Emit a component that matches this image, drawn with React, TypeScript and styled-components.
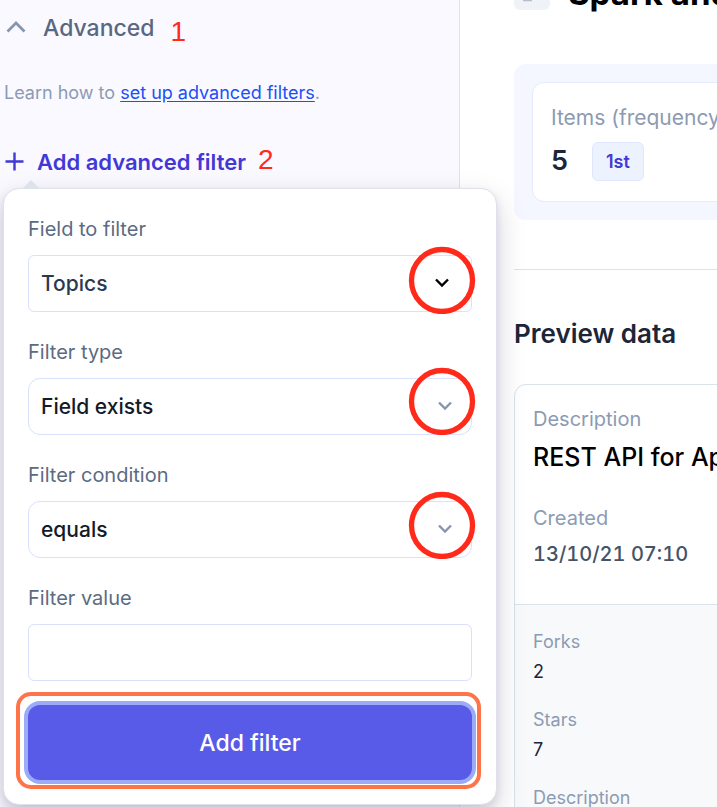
import React from "react";
import styled, { createGlobalStyle, css } from "styled-components";

const GlobalStyle = createGlobalStyle`
  *, *::before, *::after { box-sizing: border-box; }
  body {
    margin: 0;
    background: #ffffff;
    font-family: Inter, "Liberation Sans", sans-serif;
    color: #1c2638;
  }
  button, input, select { font: inherit; }
`;

const Page = styled.div`
  display: grid;
  grid-template-columns: 460px minmax(0, 1fr);
  height: 100vh;
  overflow: hidden;
`;

const Sidebar = styled.aside`
  display: flex;
  flex-direction: column;
  align-items: flex-start;
  padding: 12px 4px;
  background: #faf9ff;
  border-right: 1px solid #dde2f8;
`;

const StepRow = styled.div`
  display: flex;
  align-items: flex-start;
  gap: 12px;
`;

const SectionToggle = styled.button`
  display: flex;
  align-items: center;
  gap: 15px;
  padding: 0;
  border: 0;
  background: none;
  color: #586880;
  font-size: 23px;
  font-weight: 500;
  line-height: 32px;
`;

const StepNumber = styled.span`
  color: #ff2a1a;
  font-family: "Liberation Sans", Arial, sans-serif;
  font-size: 28px;
  line-height: 28px;
`;

const LowStepNumber = styled(StepNumber)`
  padding: 6px 0 0 4px;
`;

const Hint = styled.p`
  margin: 35px 0 41px;
  color: #8c9bb3;
  font-size: 18px;
  line-height: 24px;

  a {
    color: #1b50f5;
    text-underline-offset: 2px;
  }
`;

const AddFilterAnchor = styled.div`
  position: relative;
  width: 100%;
`;

const AddTrigger = styled.button`
  display: flex;
  align-items: center;
  gap: 13px;
  padding: 0;
  border: 0;
  background: none;
  color: #4338d6;
  font-size: 22px;
  font-weight: 600;
  line-height: 32px;
`;

const Popover = styled.form`
  position: absolute;
  top: calc(100% + 10px);
  left: -1px;
  z-index: 2;
  display: flex;
  flex-direction: column;
  width: 494px;
  padding: 24px;
  border: 1px solid #dfe0ee;
  border-radius: 16px;
  background: #ffffff;
  box-shadow: 0 12px 30px rgba(22, 14, 60, 0.18), 0 4px 8px rgba(22, 14, 60, 0.1);
`;

const PopoverArrow = styled.svg`
  position: absolute;
  bottom: 100%;
  left: 18px;
`;

const Field = styled.div`
  display: flex;
  flex-direction: column;
  gap: 12px;
  margin: 2px 0 24px;
`;

const FieldLabel = styled.label`
  color: #5c6b82;
  font-size: 20px;
  line-height: 28px;
`;

const Control = styled.div`
  position: relative;
  display: flex;
`;

const controlBox = css<{ $round?: boolean }>`
  width: 100%;
  height: 57px;
  padding: 0 12px;
  border: 1px solid #d9e1fb;
  border-radius: ${(p) => (p.$round ? 12 : 6)}px;
  background: #ffffff;
  font-size: 21px;
  font-weight: 500;
  outline: none;
`;

const Select = styled.select<{ $round?: boolean }>`
  ${controlBox}
  appearance: none;
  color: ${(p) => (p.$round ? "#131a28" : "#2b394e")};
`;

const TextInput = styled.input<{ $round?: boolean }>`
  ${controlBox}
`;

const SelectArrow = styled.svg<{ $inset: number }>`
  position: absolute;
  top: 22px;
  right: ${(p) => p.$inset}px;
  pointer-events: none;
`;

const CircleMark = styled.svg<{ $top: number }>`
  position: absolute;
  top: ${(p) => p.$top}px;
  right: -4px;
  pointer-events: none;
`;

const SubmitWrap = styled.div`
  position: relative;
  display: flex;

  &::after {
    content: "";
    position: absolute;
    inset: -13px -9px -9px -12px;
    border: 4px solid #ff7348;
    border-radius: 15px;
    pointer-events: none;
  }
`;

const SubmitButton = styled.button`
  width: 100%;
  height: 75px;
  border: 0;
  border-radius: 12px;
  background: #585be8;
  box-shadow: 0 0 0 4px #9babf7;
  color: #ffffff;
  font-size: 23px;
  font-weight: 500;
`;

const Main = styled.main`
  min-width: 0;
  padding-left: 54px;
`;

const TitleRow = styled.header`
  display: flex;
  align-items: flex-end;
  gap: 18px;
  height: 10px;
`;

const Thumbnail = styled.svg`
  flex: none;
`;

const Title = styled.h1`
  margin: 0;
  color: #000000;
  font-size: 33px;
  font-weight: 700;
  line-height: 34px;
  white-space: nowrap;
`;

const StatsPanel = styled.section`
  min-width: 480px;
  margin-top: 54px;
  padding: 18px;
  border-radius: 12px;
  background: #f4f7ff;
`;

const StatCard = styled.div`
  padding: 21px 18px 20px;
  border: 1px solid #e5ebfd;
  border-radius: 12px;
  background: #ffffff;
`;

const StatLabel = styled.div`
  color: #8c9bb3;
  font-size: 21px;
  line-height: 28px;
  white-space: nowrap;
`;

const StatRow = styled.div`
  display: flex;
  align-items: center;
  gap: 24px;
  margin-top: 9px;
`;

const StatValue = styled.strong`
  font-size: 27px;
  font-weight: 600;
  line-height: 40px;
`;

const Badge = styled.span`
  padding: 0 13px;
  border: 1px solid #dfe7fe;
  border-radius: 6px;
  background: #edf3fe;
  color: #4338d6;
  font-size: 18px;
  font-weight: 600;
  line-height: 37px;
`;

const Divider = styled.hr`
  margin: 49px 0 0;
  border: 0;
  border-top: 1px solid #d9e0f8;
`;

const PreviewTitle = styled.h2`
  margin: 44px 0 0;
  font-size: 26px;
  font-weight: 600;
  line-height: 40px;
`;

const PreviewCard = styled.section`
  min-width: 480px;
  margin-top: 30px;
  border: 1px solid #dae2ec;
  border-radius: 12px;
  background: #ffffff;
`;

const PreviewHead = styled.dl`
  margin: 0;
  padding: 20px 18px 34px;
  white-space: nowrap;
`;

const PreviewBody = styled.dl`
  margin: 0;
  padding: 24px 18px;
  border-top: 1px solid #dae2ec;
  background: #f7f9fb;
`;

const Term = styled.dt`
  color: #8c9bb3;
  font-size: 20px;
  line-height: 28px;
`;

const Lead = styled.dd`
  margin: 6px 0 28px;
  color: #000000;
  font-size: 25px;
  font-weight: 500;
  line-height: 37px;
`;

const DateValue = styled.dd`
  margin: 6px 0 0;
  color: #465266;
  font-size: 20px;
  font-weight: 500;
  font-variant-numeric: tabular-nums;
  line-height: 32px;
`;

const SmallTerm = styled.dt`
  color: #8c9bb3;
  font-size: 18px;
  line-height: 26px;
`;

const SmallValue = styled.dd`
  margin: 4px 0 22px;
  font-size: 18px;
  line-height: 26px;
`;

type FilterSelectProps = {
  id: string;
  label: string;
  value: string;
  round?: boolean;
  arrowColor: string;
  arrowInset: number;
  markTop: number;
};

function FilterSelect({ id, label, value, round, arrowColor, arrowInset, markTop }: FilterSelectProps) {
  return (
    <Field>
      <FieldLabel htmlFor={id}>{label}</FieldLabel>
      <Control>
        <Select id={id} $round={round} defaultValue={value}>
          <option>{value}</option>
        </Select>
        <SelectArrow $inset={arrowInset} width="16" height="12" viewBox="0 0 16 12" fill="none" aria-hidden="true">
          <path d="M2 2.500l6 6 6-6" stroke={arrowColor} strokeWidth="2.400" />
        </SelectArrow>
        <CircleMark $top={markTop} width="68" height="68" viewBox="0 0 68 68" fill="none" aria-hidden="true">
          <ellipse cx="34" cy="34.500" rx="30.500" ry="31" stroke="#ff2a1a" strokeWidth="5.300" />
        </CircleMark>
      </Control>
    </Field>
  );
}

export default function App() {
  return (
    <>
      <GlobalStyle />
      <Page>
        <Sidebar>
          <StepRow>
            <SectionToggle type="button" aria-expanded="true">
              <svg width="24" height="24" viewBox="0 0 24 24" fill="none" aria-hidden="true">
                <path d="M3.500 15.500l8.500-8.500 8.500 8.500" stroke="#8796ae" strokeWidth="2.800" />
              </svg>
              Advanced
            </SectionToggle>
            <LowStepNumber>1</LowStepNumber>
          </StepRow>
          <Hint>
            Learn how to <a href="#advanced-filters">set up advanced filters</a>.
          </Hint>
          <AddFilterAnchor>
            <StepRow>
              <AddTrigger type="button" aria-expanded="true">
                <svg width="20" height="20" viewBox="0 0 20 20" fill="none" aria-hidden="true">
                  <path d="M10.500 0.500v18M1.500 9.500h18" stroke="#4338d6" strokeWidth="2.400" />
                </svg>
                Add advanced filter
              </AddTrigger>
              <StepNumber>2</StepNumber>
            </StepRow>
            <Popover onSubmit={(e) => e.preventDefault()}>
              <PopoverArrow width="18" height="9" viewBox="0 0 18 9" aria-hidden="true">
                <path d="M0 9l9-9 9 9z" fill="#dce3ec" />
              </PopoverArrow>
              <FilterSelect id="field" label="Field to filter" value="Topics" arrowColor="#000000" arrowInset={22} markTop={-9} />
              <FilterSelect id="type" label="Filter type" value="Field exists" round arrowColor="#8796ae" arrowInset={19} markTop={-11} />
              <FilterSelect id="condition" label="Filter condition" value="equals" round arrowColor="#8796ae" arrowInset={19} markTop={-10} />
              <Field>
                <FieldLabel htmlFor="value">Filter value</FieldLabel>
                <TextInput id="value" type="text" />
              </Field>
              <SubmitWrap>
                <SubmitButton type="submit">Add filter</SubmitButton>
              </SubmitWrap>
            </Popover>
          </AddFilterAnchor>
        </Sidebar>
        <Main>
          <TitleRow>
            <Thumbnail width="36" height="36" viewBox="0 0 36 36" aria-hidden="true">
              <rect width="36" height="36" rx="6" fill="#eff2f6" />
              <path d="M9 26.500h9" stroke="#b6bdc8" strokeWidth="1.500" />
            </Thumbnail>
            <Title>Spark and</Title>
          </TitleRow>
          <StatsPanel>
            <StatCard>
              <StatLabel>Items (frequency)</StatLabel>
              <StatRow>
                <StatValue>5</StatValue>
                <Badge>1st</Badge>
              </StatRow>
            </StatCard>
          </StatsPanel>
          <Divider />
          <PreviewTitle>Preview data</PreviewTitle>
          <PreviewCard>
            <PreviewHead>
              <Term>Description</Term>
              <Lead>REST API for Apache</Lead>
              <Term>Created</Term>
              <DateValue>13/10/21 07:10</DateValue>
            </PreviewHead>
            <PreviewBody>
              <SmallTerm>Forks</SmallTerm>
              <SmallValue>2</SmallValue>
              <SmallTerm>Stars</SmallTerm>
              <SmallValue>7</SmallValue>
              <SmallTerm>Description</SmallTerm>
            </PreviewBody>
          </PreviewCard>
        </Main>
      </Page>
    </>
  );
}
